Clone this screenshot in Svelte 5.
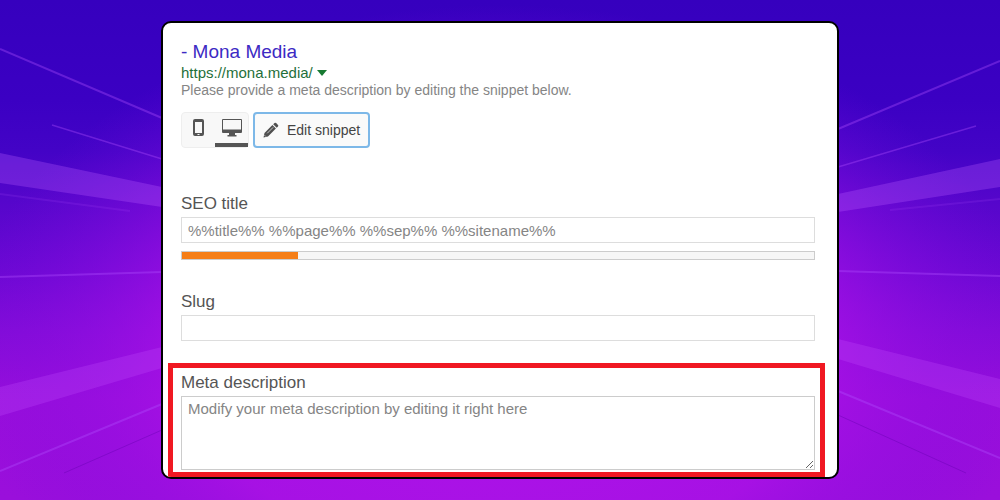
<script>
  let title = $state('');
  let slug = $state('');
  let description = $state('');
  let view = $state('desktop');
  let progress = 18.4;
</script>

<main class="page">
  <svg class="backdrop" viewBox="0 0 1000 500" preserveAspectRatio="none" aria-hidden="true">
    <defs>
      <linearGradient id="base" x1="0" y1="0" x2="0" y2="1">
        <stop offset="0" stop-color="#3600be" />
        <stop offset="0.2" stop-color="#3b00c3" />
        <stop offset="0.3" stop-color="#4303c6" />
        <stop offset="0.4" stop-color="#5506cb" />
        <stop offset="0.54" stop-color="#6b08d3" />
        <stop offset="0.66" stop-color="#820cd8" />
        <stop offset="0.8" stop-color="#980edb" />
        <stop offset="1" stop-color="#9a0fdb" />
      </linearGradient>
      <radialGradient id="glow" gradientUnits="userSpaceOnUse" cx="0" cy="0" r="1" gradientTransform="translate(500 350) scale(540 345)">
        <stop offset="0" stop-color="#b014ea" />
        <stop offset="0.6" stop-color="#ac12e8" stop-opacity="0.7" />
        <stop offset="1" stop-color="#7a0ae0" stop-opacity="0" />
      </radialGradient>
    </defs>
    <rect width="1000" height="500" fill="url(#base)" />
    <rect width="1000" height="500" fill="url(#glow)" />
    <g fill="#b95cff" fill-opacity="0.3">
      <path d="M0 153 162 187V207L0 183Z" />
      <path d="M1000 159 838 194V212L1000 187Z" />
    </g>
    <g fill="#c650ff" fill-opacity="0.26">
      <path d="M0 387 162 347V368L0 416Z" />
      <path d="M1000 379 838 339V359L1000 408Z" />
    </g>
    <g fill="none" stroke="#b250ff" stroke-opacity="0.36" stroke-width="2">
      <path d="M0 49 162 118M0 277 162 272M0 471 162 404" />
      <path d="M1000 61 838 129M1000 276 838 271M1000 458 838 391" />
      <path stroke-width="1.5" d="M52 125 162 159M976 126 838 167" />
      <path stroke-opacity="0.15" d="M0 194 130 211M1000 199 890 210" />
    </g>
    <path d="M64 473 162 430M966 473 838 415" fill="none" stroke="#6500b0" stroke-opacity="0.4" />
  </svg>

  <section class="card">
    <header class="snippet">
      <a class="title" href="#top">- Mona Media</a>
      <div class="url">
        <span>https://mona.media/</span>
        <svg width="10" height="6" viewBox="0 0 10 6" aria-hidden="true"><path d="M0 0H10L5 6Z" fill="#177a32" /></svg>
      </div>
      <p class="hint">Please provide a meta description by editing the snippet below.</p>
    </header>

    <div class="toolbar">
      <div class="views">
        <button type="button" aria-label="Mobile preview" class:active={view === 'mobile'} onclick={() => (view = 'mobile')}>
          <svg width="11" height="18" viewBox="0 0 11 18"><path fill="#555" fill-rule="evenodd" d="M2 0h7a2 2 0 0 1 2 2v13a2 2 0 0 1-2 2H2a2 2 0 0 1-2-2V2a2 2 0 0 1 2-2ZM2 3v11h7V3ZM4.500 15v1h2v-1Z" /></svg>
        </button>
        <button type="button" aria-label="Desktop preview" class:active={view === 'desktop'} onclick={() => (view = 'desktop')}>
          <svg width="20" height="18" viewBox="0 0 20 18"><path fill="#555" fill-rule="evenodd" d="M1 0h18a1 1 0 0 1 1 1v12a1 1 0 0 1-1 1h-6v2h1.500v1.500h-9V16H7v-2H1a1 1 0 0 1-1-1V1a1 1 0 0 1 1-1ZM1 1v9.500h18V1Z" /></svg>
        </button>
      </div>
      <button type="button" class="edit">
        <svg width="16" height="16" viewBox="0 0 16 16" aria-hidden="true">
          <path fill="#505050" d="M.5 15.500 1.500 11 9.400 3.100 12.900 6.600 5 14.500ZM10.200 2.300 11.500 1q.8-.7 1.600 0L15 2.900q.7.800 0 1.600L13.700 5.800Z" />
          <path fill="none" stroke="#fafafa" stroke-width=".7" d="M4.200 11.300 10.200 5.300M1.500 13.200 2.800 14.500" />
        </svg>
        <span>Edit snippet</span>
      </button>
    </div>

    <div class="field">
      <label for="seo-title">SEO title</label>
      <input id="seo-title" type="text" placeholder="%%title%% %%page%% %%sep%% %%sitename%%" bind:value={title} />
      <div class="meter"><div class="fill" style:width="{progress}%"></div></div>
    </div>

    <div class="field slug">
      <label for="slug">Slug</label>
      <input id="slug" type="text" bind:value={slug} />
    </div>

    <div class="field marked">
      <label for="meta-description">Meta description</label>
      <textarea id="meta-description" placeholder="Modify your meta description by editing it right here" bind:value={description}></textarea>
    </div>
  </section>
</main>

<style>
  :global(body) {
    margin: 0;
  }
  .page {
    position: relative;
    box-sizing: border-box;
    min-height: 100vh;
    padding: 21px 16px;
    display: flex;
    justify-content: center;
    align-items: flex-start;
    font-family: "Liberation Sans", Arial, sans-serif;
  }
  .backdrop {
    position: absolute;
    inset: 0;
    width: 100%;
    height: 100%;
  }
  .card {
    position: relative;
    box-sizing: border-box;
    width: 100%;
    max-width: 678px;
    padding: 18px 0 0;
    border: 2px solid #000;
    border-radius: 10px;
    background: #fff;
    overflow: hidden;
  }
  .snippet,
  .toolbar,
  .field {
    margin: 0 22px 0 18px;
  }
  .title {
    display: block;
    width: max-content;
    font-size: 19px;
    line-height: 22px;
    color: #3c2ac4;
    text-decoration: none;
  }
  .url {
    display: flex;
    align-items: center;
    gap: 4px;
    font-size: 15px;
    line-height: 19px;
    color: #1f6f3a;
  }
  .hint {
    margin: 0;
    font-size: 14px;
    line-height: 16px;
    color: #858585;
  }
  .toolbar {
    display: flex;
    gap: 4px;
    margin-top: 14px;
  }
  .views {
    display: flex;
    box-sizing: border-box;
    height: 36px;
    border: 1px solid #eee;
    border-radius: 4px;
    background: #f8f8f8;
  }
  button {
    margin: 0;
    font: inherit;
    cursor: pointer;
  }
  .views button {
    display: flex;
    justify-content: center;
    width: 33px;
    padding: 6px 0 0;
    border: 0;
    border-bottom: 4px solid transparent;
    background: none;
  }
  .views button.active {
    border-bottom-color: #555;
  }
  .edit {
    display: flex;
    align-items: center;
    gap: 8px;
    box-sizing: border-box;
    height: 36px;
    padding: 0 8px;
    border: 2px solid #7db8e8;
    border-radius: 4px;
    background: #fafafa;
    font-size: 14px;
    color: #444;
  }
  .field {
    display: flex;
    flex-direction: column;
    margin-top: 46px;
  }
  .slug {
    margin-top: 32px;
  }
  label {
    margin-bottom: 3px;
    font-size: 17px;
    line-height: 20px;
    color: #555;
  }
  input,
  textarea {
    box-sizing: border-box;
    width: 100%;
    margin: 0;
    border: 1px solid #ddd;
    border-radius: 0;
    background: #fff;
    font: inherit;
    font-size: 15px;
    color: #444;
    outline: none;
  }
  input {
    height: 26px;
    padding: 0 6px;
  }
  textarea {
    display: block;
    height: 74px;
    padding: 3px 6px;
    border-color: #ccc;
    line-height: 18px;
    resize: vertical;
  }
  ::placeholder {
    color: #858585;
    opacity: 1;
  }
  .meter {
    box-sizing: border-box;
    height: 9px;
    margin-top: 8px;
    border: 1px solid #ccc;
    background: #f6f6f6;
  }
  .fill {
    height: 100%;
    background: #f57e17;
  }
  .marked {
    margin: 22px 12px 0 5px;
    padding: 5px 5px 2px 8px;
    border: 5px solid #f01822;
  }
</style>
